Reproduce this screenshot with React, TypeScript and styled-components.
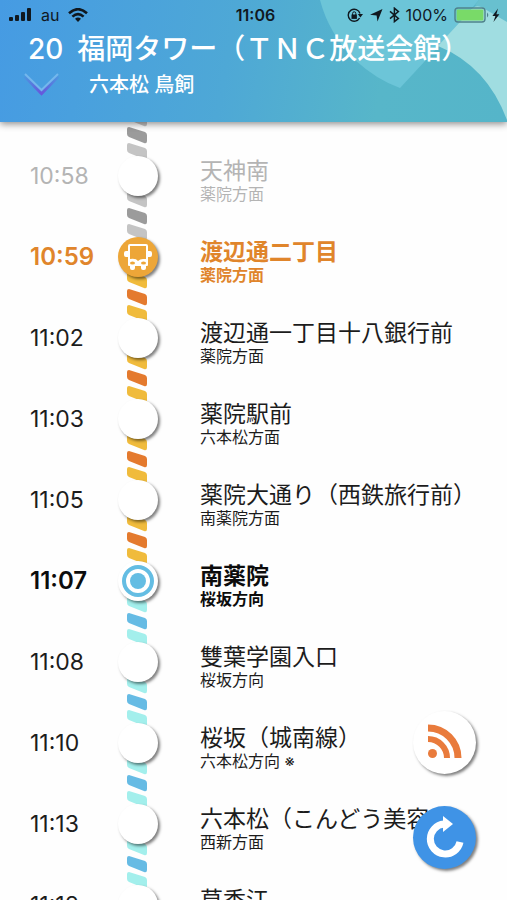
import React from "react";
import styled, { createGlobalStyle, css } from "styled-components";

type Phase = "past" | "current" | "normal" | "mine";
type Band = "gray" | "orange" | "cyan";

interface Stop {
  time: string;
  name: string;
  via?: string;
  phase: Phase;
  band: Band;
}

const stops: Stop[] = [
  { time: "10:58", name: "天神南", via: "薬院方面", phase: "past", band: "gray" },
  { time: "10:59", name: "渡辺通二丁目", via: "薬院方面", phase: "current", band: "gray" },
  { time: "11:02", name: "渡辺通一丁目十八銀行前", via: "薬院方面", phase: "normal", band: "orange" },
  { time: "11:03", name: "薬院駅前", via: "六本松方面", phase: "normal", band: "orange" },
  { time: "11:05", name: "薬院大通り（西鉄旅行前）", via: "南薬院方面", phase: "normal", band: "orange" },
  { time: "11:07", name: "南薬院", via: "桜坂方向", phase: "mine", band: "orange" },
  { time: "11:08", name: "雙葉学園入口", via: "桜坂方向", phase: "normal", band: "cyan" },
  { time: "11:10", name: "桜坂（城南線）", via: "六本松方向 ※", phase: "normal", band: "cyan" },
  { time: "11:13", name: "六本松（こんどう美容", via: "西新方面", phase: "normal", band: "cyan" },
  { time: "11:18", name: "草香江", phase: "normal", band: "cyan" },
];

const bandColors: Record<Band, [string, string]> = {
  gray: ["#c4c4c4", "#9b9b9b"],
  orange: ["#f0bb3c", "#e47a2e"],
  cyan: ["#a3efec", "#66bbe4"],
};

const textColors: Record<Phase, string> = {
  past: "#b4b4b4",
  current: "#e0852b",
  normal: "#1c1c1c",
  mine: "#0c0c0c",
};

const isBold = (phase: Phase) => phase === "current" || phase === "mine";

const GlobalStyle = createGlobalStyle`
  * { box-sizing: border-box; }
  body {
    margin: 0;
    background: #fefefe;
    font-family: Inter, "Noto Sans CJK JP", sans-serif;
  }
`;

const Screen = styled.div`
  position: relative;
  display: flex;
  flex-direction: column;
  height: 100vh;
  overflow: hidden;
`;

const Header = styled.header`
  position: relative;
  z-index: 2;
  flex: none;
  height: 122px;
  color: #fff;
  background: linear-gradient(100deg, #469be3 0%, #4ea8d6 45%, #57b6c9 75%, #55b5c9 100%);
  box-shadow: 0 2px 7px rgba(0, 0, 0, 0.45);
`;

const HeaderArt = styled.svg`
  position: absolute;
  top: 0;
  right: 0;
  height: 100%;
`;

const StatusBar = styled.div`
  position: relative;
  display: grid;
  grid-template-columns: 1fr auto 1fr;
  align-items: center;
  height: 30px;
  padding: 0 5px 0 9px;
  color: #10181f;
  font-size: 16px;
`;

const StatusGroup = styled.div<{ $end?: boolean }>`
  display: flex;
  align-items: center;
  gap: ${(p) => (p.$end ? 6 : 9)}px;
  justify-content: ${(p) => (p.$end ? "flex-end" : "flex-start")};
`;

const Clock = styled.time`
  font-weight: 600;
`;

const RouteTitle = styled.h1`
  position: relative;
  display: flex;
  gap: 14px;
  margin: 0;
  padding-left: 28px;
  font-size: 28px;
  line-height: 38px;
  font-weight: 500;
  white-space: nowrap;
`;

const RouteLine = styled.div`
  position: relative;
  display: flex;
  align-items: center;
  gap: 30px;
  height: 34px;
  padding-left: 24px;
`;

const IconButton = styled.button`
  display: flex;
  padding: 0;
  border: 0;
  background: none;
`;

const Via = styled.p`
  margin: 0;
  font-size: 20px;
  line-height: 28px;
  font-weight: 500;
`;

const StopList = styled.ol`
  flex: 1;
  min-height: 0;
  margin: 0;
  padding: 13px 0 0;
  list-style: none;
`;

const StopRow = styled.li<{ $phase: Phase }>`
  display: grid;
  grid-template-columns: 87px 42px 1fr;
  height: 81px;
  padding-left: 30px;
  color: ${(p) => textColors[p.$phase]};
  ${(p) =>
    isBold(p.$phase) &&
    css`
      font-weight: 600;
    `}
`;

const StopTime = styled.time<{ $large: boolean }>`
  align-self: center;
  font-size: ${(p) => (p.$large ? 24 : 23)}px;
  line-height: 28px;
`;

const NodeCell = styled.div`
  position: relative;
  display: grid;
  place-items: center;
`;

const Track = styled.svg`
  position: absolute;
  top: -50%;
  left: 10px;
  width: 20px;
  height: 100%;
`;

const Node = styled.span<{ $active: boolean }>`
  position: relative;
  z-index: 1;
  display: grid;
  place-items: center;
  width: 40px;
  height: 40px;
  border-radius: 50%;
  background: ${(p) => (p.$active ? "#eda638" : "#fff")};
  box-shadow: 2px 2px 3px rgba(0, 0, 0, 0.5);
`;

const StopText = styled.div`
  padding: 22px 0 0 41px;
  white-space: nowrap;
`;

const StopName = styled.div`
  font-size: 23px;
  line-height: 28px;
`;

const StopVia = styled.div`
  font-size: 16px;
  line-height: 18px;
`;

const Actions = styled.div`
  position: absolute;
  z-index: 3;
  right: 31px;
  bottom: 31px;
  display: grid;
  gap: 32px;
`;

const RoundButton = styled.button<{ $fill: string }>`
  display: grid;
  place-items: center;
  width: 63px;
  height: 63px;
  padding: 0;
  border: 0;
  border-radius: 50%;
  background: ${(p) => p.$fill};
  box-shadow: 2px 2px 3px rgba(0, 0, 0, 0.5);
`;

function BandTrack({ band }: { band: Band }) {
  const [light, dark] = bandColors[band];
  const stripe = (y: number, color: string) => (
    <path
      d={`M2 ${y} L18 ${y + 5} Q20 ${y + 6} 20 ${y + 8} V${y + 14} Q20 ${y + 17} 17 ${y + 16} L2 ${y + 10} Q0 ${y + 9} 0 ${y + 7} V${y + 2} Q0 ${y} 2 ${y}Z`}
      fill={color}
    />
  );
  return (
    <Track viewBox="0 0 20 81" aria-hidden>
      {stripe(15, light)}
      {stripe(32, dark)}
      {stripe(48, light)}
    </Track>
  );
}

function BusIcon() {
  return (
    <svg width="28" height="28" viewBox="0 0 28 28" aria-hidden>
      <path
        fill="#fff"
        d="M6 1H22Q24 1 24 3V8H26Q28 8 28 10V12Q28 14 26 14H24V22Q24 23 23 23H22V25Q22 27 20 27H19Q17 27 17 25V23H11V25Q11 27 9 27H8Q6 27 6 25V23H5Q4 23 4 22V14H2Q0 14 0 12V10Q0 8 2 8H4V3Q4 1 6 1Z"
      />
      <path fill="#eda638" d="M6 3H22V16H19Q16 16 14 18Q12 15 6 16Z" />
      <ellipse cx="8.5" cy="20" rx="2.5" ry="1.5" fill="#eda638" />
      <ellipse cx="19.5" cy="20" rx="2.5" ry="1.5" fill="#eda638" />
    </svg>
  );
}

function TargetIcon() {
  return (
    <svg width="34" height="34" viewBox="0 0 34 34" aria-hidden>
      <circle cx="17" cy="17" r="14" fill="none" stroke="#64bde3" strokeWidth="4" />
      <circle cx="17" cy="17" r="8" fill="#64bde3" />
    </svg>
  );
}

export default function App() {
  return (
    <Screen>
      <GlobalStyle />
      <Header>
        <HeaderArt width="200" height="122" viewBox="0 0 200 122" aria-hidden>
          <path d="M13 0Q22 34 48 60Q70 80 93 88L132 46L172 0Z" fill="#6cc5d8" />
          <path d="M172 0H200V24L168 5Z" fill="#68c0cf" />
          <path d="M131 46L162 12Q168 3 176 8L200 22V120Q180 66 131 46Z" fill="#a0dde1" />
        </HeaderArt>
        <StatusBar>
          <StatusGroup>
            <svg width="23" height="14" viewBox="0 0 23 14" fill="currentColor" aria-hidden>
              <rect x="0" y="9" width="4" height="4" rx="1" />
              <rect x="6" y="7" width="4" height="6" rx="1" />
              <rect x="12" y="4" width="4" height="9" rx="1" />
              <rect x="18" y="0" width="4" height="13" rx="1" />
            </svg>
            <span>au</span>
            <svg width="20" height="14" viewBox="0 0 20 14" aria-hidden>
              <g fill="none" stroke="currentColor" strokeWidth="2.6">
                <path d="M1 5.2Q10 -2.8 19 5.2" />
                <path d="M4.4 8.6Q10 3.6 15.6 8.6" />
              </g>
              <path d="M7 10.8Q10 8.4 13 10.8L10 14Z" fill="currentColor" />
            </svg>
          </StatusGroup>
          <Clock>11:06</Clock>
          <StatusGroup $end>
            <svg width="16" height="15" viewBox="0 0 16 15" fill="none" stroke="currentColor" aria-hidden>
              <path d="M12.6 10A6 6 0 1 1 13 5.5" strokeWidth="1.4" />
              <path d="M10.8 6H16L13.4 9.4Z" fill="currentColor" stroke="none" />
              <rect x="4.5" y="6.5" width="5.4" height="4.4" fill="currentColor" stroke="none" />
              <path d="M5.6 7V5.4Q5.6 3.8 7.2 3.8T8.8 5.4V7" strokeWidth="1" />
            </svg>
            <svg width="14" height="14" viewBox="0 0 14 14" fill="currentColor" aria-hidden>
              <path d="M13.5 1L8.5 13.5L7.6 7.4L1 6.8Z" />
            </svg>
            <svg width="11" height="16" viewBox="0 0 11 16" fill="none" stroke="currentColor" strokeWidth="1.5" aria-hidden>
              <path d="M1 4.4L9.4 11.4L5.4 14.6V1.2L9.4 4.6L1 11.6" />
            </svg>
            <span>100%</span>
            <svg width="48" height="17" viewBox="0 0 48 17" aria-hidden>
              <rect x="1" y="1" width="30" height="14" rx="3" fill="none" stroke="#4f828b" strokeWidth="1.4" />
              <rect x="2.6" y="2.6" width="26.8" height="10.8" rx="1" fill="#79da68" />
              <path d="M33 5.6Q35.6 8 33 10.6Z" fill="#4f828b" />
              <path d="M44 1.5L38.4 9H41.4L39.4 15L45.4 7.2H42.4Z" fill="currentColor" />
            </svg>
          </StatusGroup>
        </StatusBar>
        <RouteTitle>
          <span>20</span>
          <span>福岡タワー（ＴＮＣ放送会館）</span>
        </RouteTitle>
        <RouteLine>
          <IconButton aria-label="路線を表示">
            <svg width="35" height="24" viewBox="0 0 35 24" fill="none" aria-hidden>
              <defs>
                <linearGradient id="chevron" x1="0" y1="0" x2="0" y2="1">
                  <stop offset="0" stopColor="#4b99e0" />
                  <stop offset="1" stopColor="#6658dc" />
                </linearGradient>
              </defs>
              <path d="M1 3L17.5 20L34 3" stroke="url(#chevron)" strokeWidth="4" />
              <path d="M1 1L17.5 17L34 1" stroke="#74b7ed" strokeWidth="2" />
            </svg>
          </IconButton>
          <Via>六本松 鳥飼</Via>
        </RouteLine>
      </Header>
      <StopList>
        {stops.map((s) => (
          <StopRow key={s.time} $phase={s.phase}>
            <StopTime $large={isBold(s.phase)}>{s.time}</StopTime>
            <NodeCell>
              <BandTrack band={s.band} />
              <Node $active={s.phase === "current"}>
                {s.phase === "current" && <BusIcon />}
                {s.phase === "mine" && <TargetIcon />}
              </Node>
            </NodeCell>
            <StopText>
              <StopName>{s.name}</StopName>
              {s.via && <StopVia>{s.via}</StopVia>}
            </StopText>
          </StopRow>
        ))}
      </StopList>
      <Actions>
        <RoundButton $fill="#fff" aria-label="運行情報">
          <svg width="34" height="38" viewBox="0 0 34 38" aria-hidden>
            <circle cx="4.5" cy="29.5" r="4.5" fill="#e97b3c" />
            <g fill="none" stroke="#e97b3c">
              <path d="M0 15A19 19 0 0 1 19 34" strokeWidth="6" />
              <path d="M0 4A30 30 0 0 1 30 34" strokeWidth="7" />
            </g>
          </svg>
        </RoundButton>
        <RoundButton $fill="#3f93e6" aria-label="更新">
          <svg width="38" height="46" viewBox="0 0 38 46" aria-hidden>
            <path d="M34 27A15 15 0 1 1 18 9" fill="none" stroke="#fff" strokeWidth="7" />
            <path d="M17 1L27 9L17 17Z" fill="#fff" />
          </svg>
        </RoundButton>
      </Actions>
    </Screen>
  );
}
